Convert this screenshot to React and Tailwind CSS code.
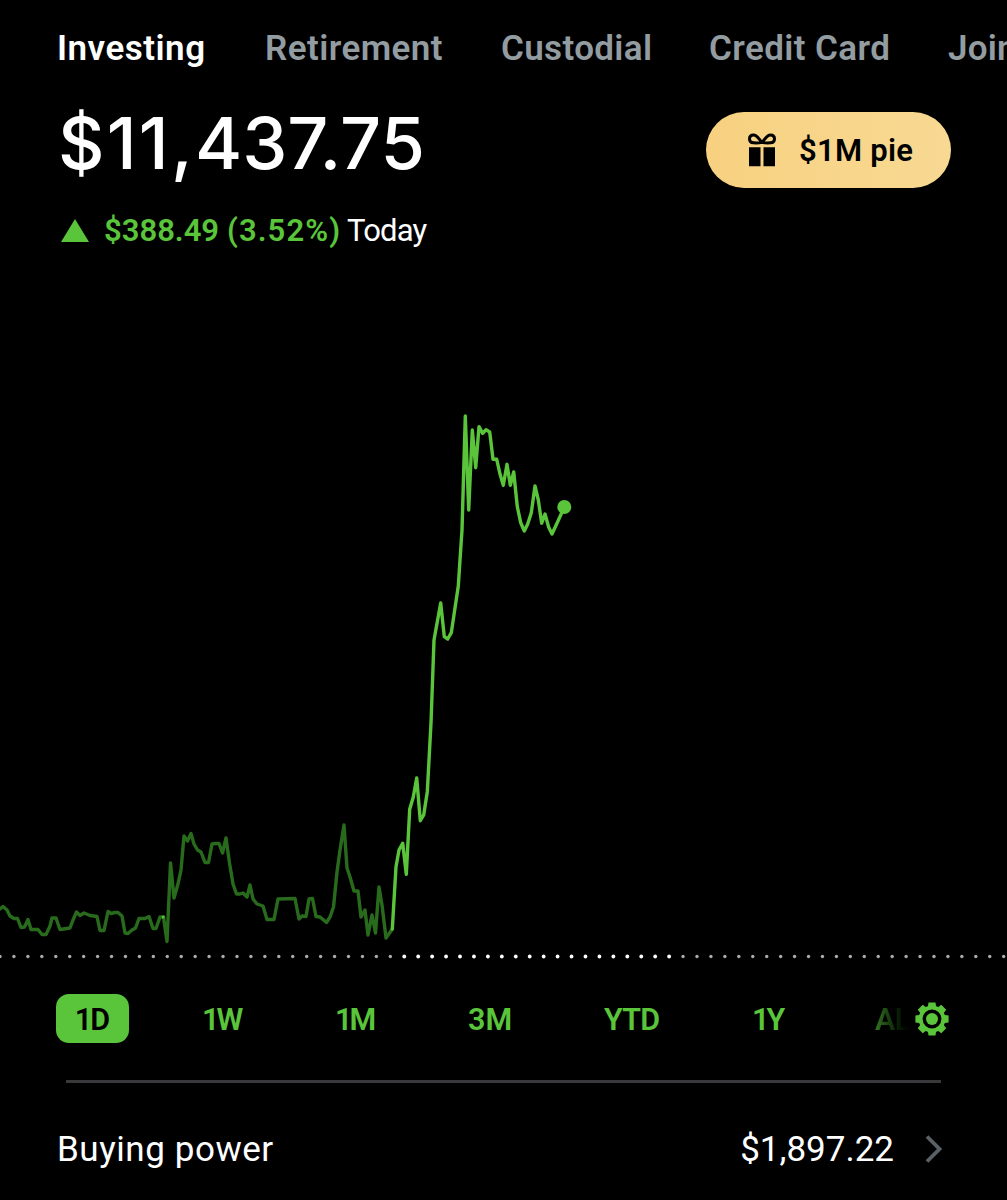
const TABS = [
  { name: "Investing", style: "w-[208px] tracking-[0.5px] text-white" },
  { name: "Retirement", style: "w-[236px] tracking-[0.45px] text-[#929ca1]" },
  { name: "Custodial", style: "w-[208px] tracking-[0.35px] text-[#929ca1]" },
  { name: "Credit Card", style: "w-[239px] tracking-[0.4px] text-[#929ca1]" },
  { name: "Joint", style: "w-[100px] tracking-[0.2px] text-[#929ca1]" },
];

const RANGES = [
  { name: "1W", style: "w-[133px] tracking-[-3px]" },
  { name: "1M", style: "w-[133px] tracking-[-3px]" },
  { name: "3M", style: "w-[136px]" },
  { name: "YTD", style: "w-[148px] tracking-[-0.8px]" },
  { name: "1Y", style: "w-[123px] tracking-[-3px]" },
];

const PRE_MARKET =
  "0,909 3,906.5 7,910 10,916 14,918.5 17.5,918.5 21,927.5 24.5,927 28,919.5 31,929.5 38,929.5 42,934.5 46,934.5 50,926 52,918 56,918 60,929.5 70,928 73,920 76.5,912 80,915.5 84,913 90,915.5 97,916.5 100,930.5 104,930.5 108,911.5 111,913.5 115,912.5 118,912.5 122,916 125,933 128,933.5 132,930 135.5,928 139,918.5 145,918.5 149,916.5 153,928.5 156,928.5 160,917 163.5,917 167,941.5 170.5,863 174,898 178,884 181,870 184,836 187.5,841 191,833.5 194,844 197.5,850 201,852 205,862.5 208.5,862.5 212,844 215.5,843.5 219,843.5 222.5,853 226,838 229.5,863 233,884 236.5,894 240,894 243,893 247,897 250,885 253,899 257,904 263,906 267,919.5 274,919.5 278,899 295,898.5 299,919 302,916 306,916.5 309,899 312.5,898.5 316,916.5 320,917 326.5,922.5 330,917 333.5,907 337,872 340,850 344,825 347,868 350,877 354,891 358,891 361,917 365,910 368,935 372,915 375.5,933 379,887 382,905 386,938 392.3,929";

const MARKET =
  "392.3,929 396,866.7 399,850 402.7,843.3 406.3,874.3 409.7,809.3 413.3,797 416.7,778 420.3,820.7 423.7,815 427.3,791.7 431,723 434,640 440.7,603 444.3,636.7 447.7,639 451.3,632.7 455,608 458.3,586 460,560 462,530 465.3,416 468.7,510 472.3,430 475.7,467.7 479,426.7 482.7,433.3 486,429.7 489.7,432 493,459.3 496.7,459.3 500,474 503.3,485.3 507,464.3 510.3,485.3 513.7,472 517.3,506.7 520.7,522.7 524.3,531 527.7,524 531.3,512.7 535,486 538.3,500 541.7,523.3 545,514 548.7,527.3 552,534 558,521 564.3,507";

const DOTS = Array.from({ length: 73 }, (_, i) => i);
const TEETH = [0, 45, 90, 135, 180, 225, 270, 315];

const GiftIcon = () => (
  <svg width="30" height="34" viewBox="0 0 30 34" className="shrink-0">
    <path
      d="M15 9.400C12.500 9.900 9 10 6.400 9.800C3.900 9.600 2.500 8.200 2.500 5.900C2.500 3.600 4 1.900 6.500 1.900C10 1.900 12 6 15 9.400C18 6 20 1.900 23.500 1.900C26 1.900 27.500 3.600 27.500 5.900C27.500 8.200 26.100 9.600 23.600 9.800C21 10 17.500 9.900 15 9.400Z"
      fill="none"
      stroke="#000"
      strokeWidth="3"
      strokeLinejoin="round"
    />
    <path d="M2 14.300h11.500v19H2zM16.500 14.300H28v19H16.500z" />
  </svg>
);

const GearIcon = () => (
  <svg width="34" height="34" viewBox="-17 -17 34 34" className="shrink-0">
    {TEETH.map((angle) => (
      <path
        key={angle}
        d="M-3.500 -16.600H3.500L4.300 -11H-4.300Z"
        fill="#5ac53a"
        transform={`rotate(${angle})`}
      />
    ))}
    <circle r="11.400" fill="none" stroke="#5ac53a" strokeWidth="4" />
    <circle r="6" fill="#5ac53a" />
  </svg>
);

const Chart = () => (
  <svg width="1007" height="700" viewBox="0 270 1007 700" className="block">
    <g fill="none" strokeWidth="3.400" strokeLinejoin="round" strokeLinecap="round">
      <polyline points={PRE_MARKET} stroke="#296b1c" />
      <polyline points={MARKET} stroke="#5ac53a" />
    </g>
    <circle cx="163.200" cy="917" r="1.500" fill="#5ac53a" />
    <circle cx="564.300" cy="507" r="7" fill="#5ac53a" />
    {/* previous close */}
    {DOTS.map((i) => {
      const open = i > 28 && i < 49;
      return (
        <circle
          key={i}
          cx={i * 13.94}
          cy="956.500"
          r={open ? 1.9 : 1.7}
          fill={open ? "#fff" : "#a9abad"}
        />
      );
    })}
  </svg>
);

const App = () => {
  return (
    <div className="h-[1200px] w-[1007px] overflow-hidden bg-black font-['Roboto',sans-serif] text-white">
      {/* account tabs */}
      <nav className="flex h-[94px] items-center pt-[4px] pl-[57px] text-[35px] font-semibold whitespace-nowrap">
        {TABS.map((tab) => (
          <span key={tab.name} className={`shrink-0 ${tab.style}`}>
            {tab.name}
          </span>
        ))}
      </nav>

      {/* balance */}
      <header className="flex h-[176px] justify-between pr-[56px] pl-[58px]">
        <div className="flex flex-col">
          <h1 className="h-[98px] font-['Inter',sans-serif] text-[72px] leading-[97px] font-medium">
            <span className="tracking-[2.2px]">$11,</span>437.75
          </h1>
          <div className="flex h-[76px] items-center pl-[3px] text-[31px]">
            <svg width="28" height="23" viewBox="0 0 28 23">
              <path d="M14 0L28 23H0Z" fill="#5ac53a" />
            </svg>
            <span className="mt-[2px] ml-[15px] w-[123px] font-semibold text-[#5ac53a]">
              $388.49
            </span>
            <span className="mt-[2px] w-[120px] font-semibold tracking-[1.1px] text-[#5ac53a]">
              (3.52%)
            </span>
            <span className="mt-[2px] tracking-[-0.8px]">Today</span>
          </div>
        </div>
        <button className="mt-[18px] flex h-[76px] w-[245px] items-center rounded-full bg-linear-to-r from-[#f7d180] to-[#f8d993] pl-[41px] text-[31px] font-semibold text-black">
          <GiftIcon />
          <span className="mt-[3px] ml-[22px] tracking-[0.25px]">$1M pie</span>
        </button>
      </header>

      <Chart />

      {/* time ranges */}
      <div className="flex h-[98px] items-center pl-[56px] text-[30.500px] font-semibold text-[#5ac53a]">
        <span className="mt-[-2px] mr-[73px] flex h-[49px] w-[73px] shrink-0 items-center justify-center rounded-[13px] bg-[#5ac53a] pt-[4px] pr-[2px] tracking-[-2px] text-black">
          1D
        </span>
        {RANGES.map((range) => (
          <span key={range.name} className={`mt-[2px] shrink-0 ${range.style}`}>
            {range.name}
          </span>
        ))}
        <span className="mt-[2px] w-[40px] shrink-0 bg-linear-to-r from-[#347523] to-black bg-clip-text tracking-[-0.5px] text-transparent">
          AL
        </span>
        <GearIcon />
      </div>

      <hr className="mt-[12px] mr-[66px] ml-[66px] h-[2.500px] border-0 bg-[#39393c]" />

      <div className="flex h-[132px] items-center pr-[64px] pl-[57px] text-[35px] font-normal">
        <span className="mt-[3px] tracking-[0.55px]">Buying power</span>
        <span className="mt-[3px] ml-auto">$1,897.22</span>
        <svg width="18" height="28" viewBox="0 0 18 28" className="ml-[31px]">
          <path d="M2 1.500L14.500 14L2 26.500" fill="none" stroke="#596166" strokeWidth="3.800" />
        </svg>
      </div>
    </div>
  );
};

export default App;
